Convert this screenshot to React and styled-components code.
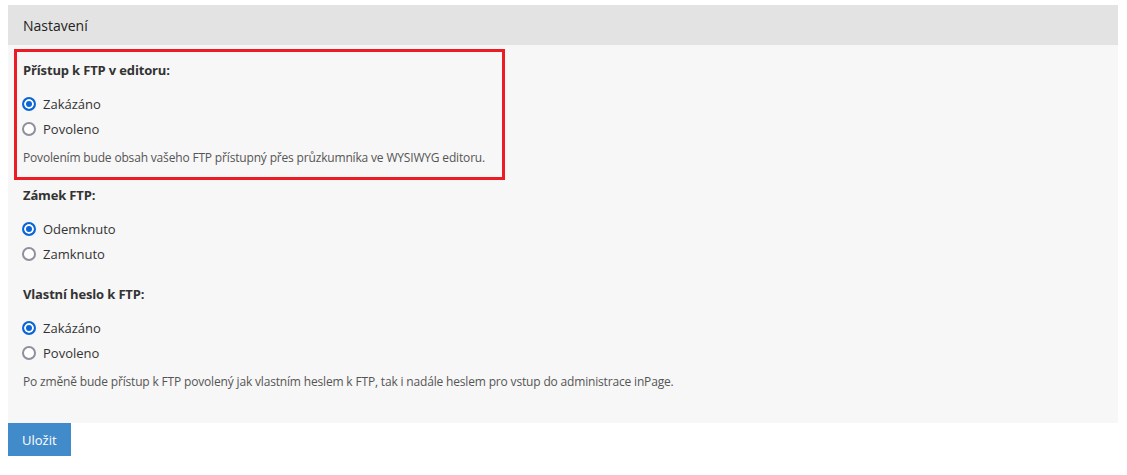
import React, { useState } from "react"
import styled, { createGlobalStyle } from "styled-components"

const GlobalStyle = createGlobalStyle`
	body {
		margin: 0;
		padding: 5px 9px 0 8px;
		background: #fff;
		font-family: "Open Sans", "Liberation Sans", sans-serif;
		color: #333;
	}
`

const Panel = styled.section`
	background: #f7f7f7;
`

const PanelHead = styled.div`
	height: 40px;
	display: flex;
	align-items: center;
	padding: 0 15px;
	background: #e3e3e3;
	font-size: 14px;
	color: #222;
`

const PanelBody = styled.div`
	padding: 15px 15px 14px;
`

const Group = styled.div`
	margin: -11px -9px 5px;
	padding: 8px 6px 10px;
	border: 3px solid ${p => (p.$highlight ? "#ed1c24" : "transparent")};
	width: ${p => (p.$highlight ? "491px" : "auto")};
	box-sizing: border-box;
`

const GroupLabel = styled.div`
	font-size: 13px;
	font-weight: 700;
	line-height: 20px;
	letter-spacing: -0.15px;
	margin-bottom: 11px;
	color: #333;
`

const Option = styled.label`
	display: flex;
	align-items: center;
	height: 25px;
	font-size: 13px;
	color: #333;
	cursor: pointer;
`

const Radio = styled.input.attrs({ type: "radio" })`
	appearance: none;
	box-sizing: border-box;
	width: 14px;
	height: 14px;
	margin: 0 7px 0 -1px;
	border: 2px solid #8f8f9d;
	border-radius: 50%;
	background: #fff;

	&:checked {
		border-color: #0b65d8;
		background: #0b65d8;
		box-shadow: inset 0 0 0 2px #fff;
	}
`

const Help = styled.p`
	margin: 8px 0 0;
	font-size: 12px;
	line-height: 18px;
	letter-spacing: -0.17px;
	color: #555;
`

const SaveButton = styled.button`
	height: 33px;
	padding: 0 14px;
	border: 0;
	background: #428bca;
	color: #fff;
	font-family: inherit;
	font-size: 13px;
	cursor: pointer;
`

const RadioGroup = ({ name, label, options, help, highlight }) => {
	const [value, setValue] = useState(options[0])

	return (
		<Group $highlight={highlight}>
			<GroupLabel>{label}</GroupLabel>
			{options.map(opt => (
				<Option key={opt}>
					<Radio
						name={name}
						checked={value == opt}
						onChange={() => setValue(opt)}
					/>
					{opt}
				</Option>
			))}
			{help && <Help>{help}</Help>}
		</Group>
	)
}

export default function App() {
	return (
		<>
			<GlobalStyle />
			<Panel>
				<PanelHead>Nastavení</PanelHead>
				<PanelBody>
					<RadioGroup
						highlight
						name="ftp-editor"
						label="Přístup k FTP v editoru:"
						options={["Zakázáno", "Povoleno"]}
						help="Povolením bude obsah vašeho FTP přístupný přes průzkumníka ve WYSIWYG editoru."
					/>
					<RadioGroup
						name="ftp-lock"
						label="Zámek FTP:"
						options={["Odemknuto", "Zamknuto"]}
					/>
					<RadioGroup
						name="ftp-password"
						label="Vlastní heslo k FTP:"
						options={["Zakázáno", "Povoleno"]}
						help="Po změně bude přístup k FTP povolený jak vlastním heslem k FTP, tak i nadále heslem pro vstup do administrace inPage."
					/>
				</PanelBody>
			</Panel>
			<SaveButton>Uložit</SaveButton>
		</>
	)
}
